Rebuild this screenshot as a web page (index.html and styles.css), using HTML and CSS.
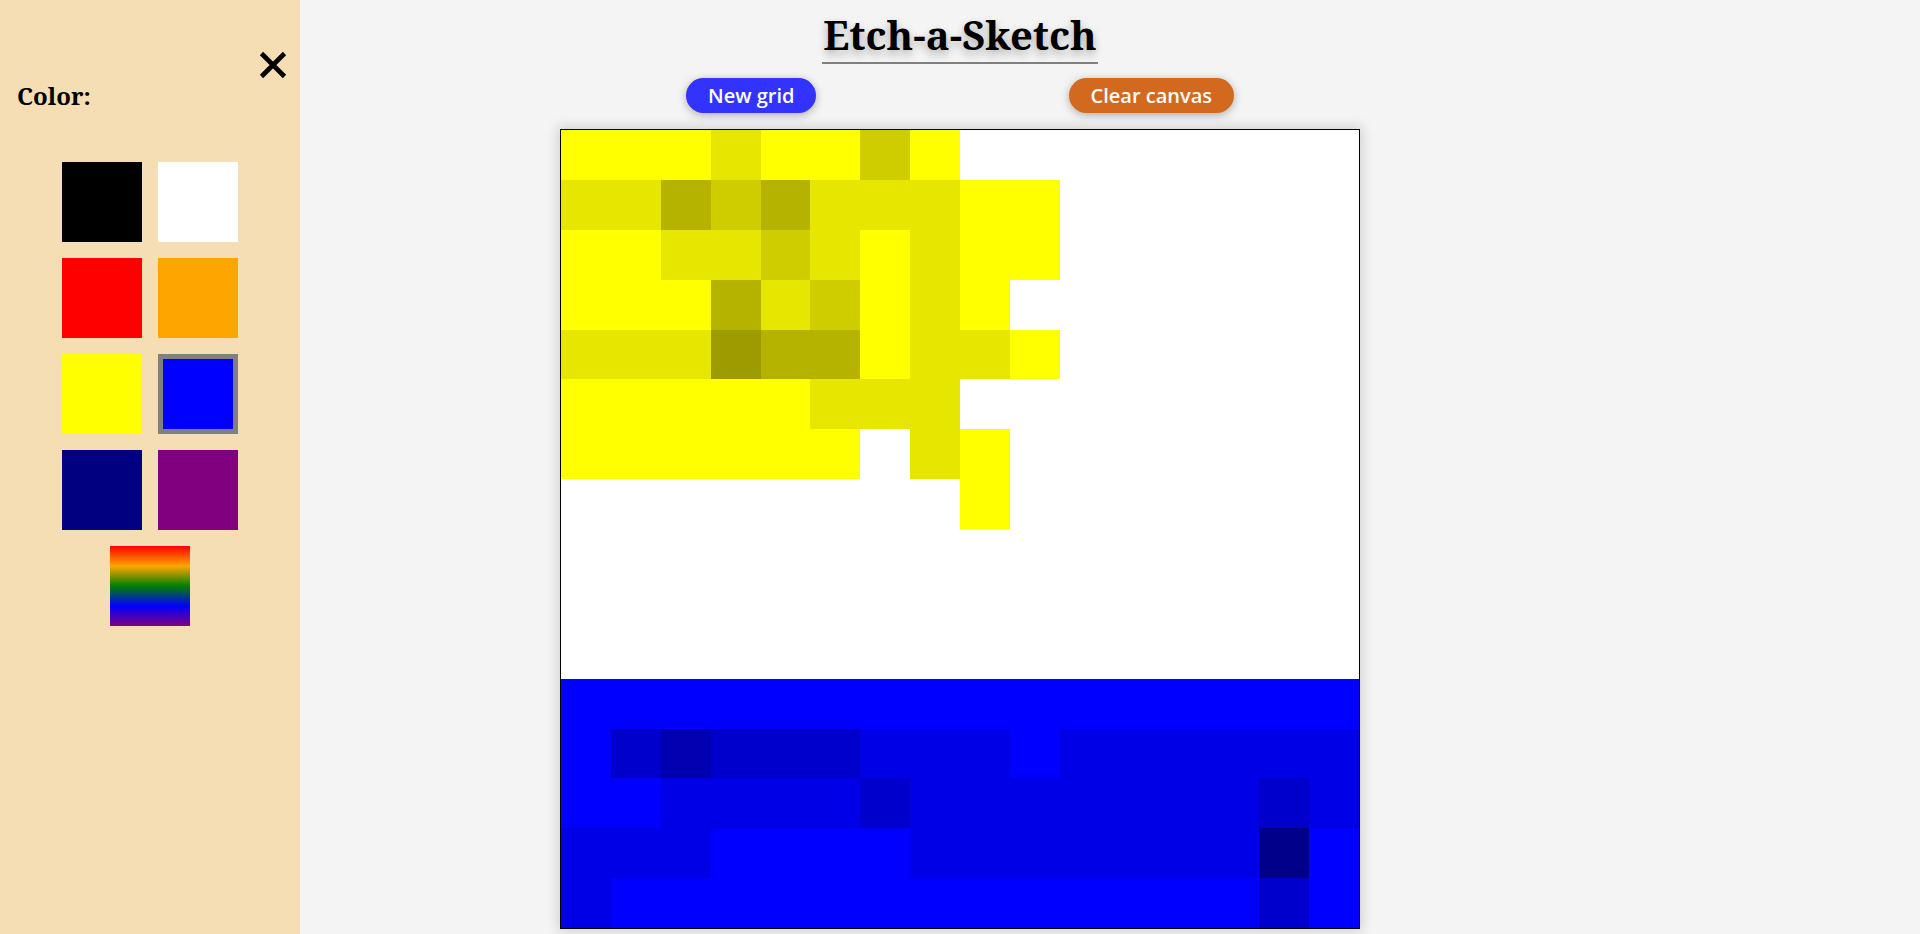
FILE: index.html
```html
<!DOCTYPE html>
<html lang="en">
<head>
<meta charset="utf-8">
<title>Etch-a-Sketch</title>
<link rel="stylesheet" href="styles.css">
</head>
<body>
<aside class="drawer">
  <div class="drawer-top">
    <button class="close" aria-label="Close">
      <svg width="28" height="28" viewBox="0 0 28 28"><path d="M2.5 2.5 L25.5 25.5 M25.5 2.5 L2.5 25.5" stroke="#000" stroke-width="4.6" fill="none"/></svg>
    </button>
  </div>
  <h2 class="drawer-title">Color:</h2>
  <div class="swatches">
    <div class="swatch sw-black"></div>
    <div class="swatch sw-white"></div>
    <div class="swatch sw-red"></div>
    <div class="swatch sw-orange"></div>
    <div class="swatch sw-yellow"></div>
    <div class="swatch sw-blue selected"></div>
    <div class="swatch sw-navy"></div>
    <div class="swatch sw-purple"></div>
    <div class="swatch sw-rainbow"></div>
  </div>
</aside>
<main class="main">
  <h1 class="title">Etch-a-Sketch</h1>
  <div class="controls">
    <button class="btn btn-new">New grid</button>
    <button class="btn btn-clear">Clear canvas</button>
  </div>
  <div class="canvas">
    <!-- row 0 -->
    <div class="y0"></div><div class="y0"></div><div class="y0"></div><div class="y1"></div><div class="y0"></div><div class="y0"></div><div class="y2"></div><div class="y0"></div><div></div><div></div><div></div><div></div><div></div><div></div><div></div><div></div>
    <!-- row 1 -->
    <div class="y1"></div><div class="y1"></div><div class="y3"></div><div class="y2"></div><div class="y3"></div><div class="y1"></div><div class="y1"></div><div class="y1"></div><div class="y0"></div><div class="y0"></div><div></div><div></div><div></div><div></div><div></div><div></div>
    <!-- row 2 -->
    <div class="y0"></div><div class="y0"></div><div class="y1"></div><div class="y1"></div><div class="y2"></div><div class="y1"></div><div class="y0"></div><div class="y1"></div><div class="y0"></div><div class="y0"></div><div></div><div></div><div></div><div></div><div></div><div></div>
    <!-- row 3 -->
    <div class="y0"></div><div class="y0"></div><div class="y0"></div><div class="y3"></div><div class="y1"></div><div class="y2"></div><div class="y0"></div><div class="y1"></div><div class="y0"></div><div></div><div></div><div></div><div></div><div></div><div></div><div></div>
    <!-- row 4 -->
    <div class="y1"></div><div class="y1"></div><div class="y1"></div><div class="y4"></div><div class="y3"></div><div class="y3"></div><div class="y0"></div><div class="y1"></div><div class="y1"></div><div class="y0"></div><div></div><div></div><div></div><div></div><div></div><div></div>
    <!-- row 5 -->
    <div class="y0"></div><div class="y0"></div><div class="y0"></div><div class="y0"></div><div class="y0"></div><div class="y1"></div><div class="y1"></div><div class="y1"></div><div></div><div></div><div></div><div></div><div></div><div></div><div></div><div></div>
    <!-- row 6 -->
    <div class="y0"></div><div class="y0"></div><div class="y0"></div><div class="y0"></div><div class="y0"></div><div class="y0"></div><div></div><div class="y1"></div><div class="y0"></div><div></div><div></div><div></div><div></div><div></div><div></div><div></div>
    <!-- row 7 -->
    <div></div><div></div><div></div><div></div><div></div><div></div><div></div><div></div><div class="y0"></div><div></div><div></div><div></div><div></div><div></div><div></div><div></div>
    <!-- row 8 -->
    <div></div><div></div><div></div><div></div><div></div><div></div><div></div><div></div><div></div><div></div><div></div><div></div><div></div><div></div><div></div><div></div>
    <!-- row 9 -->
    <div></div><div></div><div></div><div></div><div></div><div></div><div></div><div></div><div></div><div></div><div></div><div></div><div></div><div></div><div></div><div></div>
    <!-- row 10 -->
    <div></div><div></div><div></div><div></div><div></div><div></div><div></div><div></div><div></div><div></div><div></div><div></div><div></div><div></div><div></div><div></div>
    <!-- row 11 -->
    <div class="b0"></div><div class="b0"></div><div class="b0"></div><div class="b0"></div><div class="b0"></div><div class="b0"></div><div class="b0"></div><div class="b0"></div><div class="b0"></div><div class="b0"></div><div class="b0"></div><div class="b0"></div><div class="b0"></div><div class="b0"></div><div class="b0"></div><div class="b0"></div>
    <!-- row 12 -->
    <div class="b0"></div><div class="b2"></div><div class="b3"></div><div class="b2"></div><div class="b2"></div><div class="b2"></div><div class="b1"></div><div class="b1"></div><div class="b1"></div><div class="b0"></div><div class="b1"></div><div class="b1"></div><div class="b1"></div><div class="b1"></div><div class="b1"></div><div class="b1"></div>
    <!-- row 13 -->
    <div class="b0"></div><div class="b0"></div><div class="b1"></div><div class="b1"></div><div class="b1"></div><div class="b1"></div><div class="b2"></div><div class="b1"></div><div class="b1"></div><div class="b1"></div><div class="b1"></div><div class="b1"></div><div class="b1"></div><div class="b1"></div><div class="b2"></div><div class="b1"></div>
    <!-- row 14 -->
    <div class="b1"></div><div class="b1"></div><div class="b1"></div><div class="b0"></div><div class="b0"></div><div class="b0"></div><div class="b0"></div><div class="b1"></div><div class="b1"></div><div class="b1"></div><div class="b1"></div><div class="b1"></div><div class="b1"></div><div class="b1"></div><div class="b4"></div><div class="b0"></div>
    <!-- row 15 -->
    <div class="b1"></div><div class="b0"></div><div class="b0"></div><div class="b0"></div><div class="b0"></div><div class="b0"></div><div class="b0"></div><div class="b0"></div><div class="b0"></div><div class="b0"></div><div class="b0"></div><div class="b0"></div><div class="b0"></div><div class="b0"></div><div class="b2"></div><div class="b0"></div>
  </div>
</main>
</body>
</html>
```
FILE: styles.css
```css
* { box-sizing: border-box; }

html, body {
  margin: 0;
  height: 100%;
}

body {
  background: #f4f4f4;
  font-family: "Noto Serif", "DejaVu Serif", serif;
  overflow: hidden;
}

/* Drawer (overlays the page on the left) */
.drawer {
  position: fixed;
  top: 0;
  left: 0;
  width: 300px;
  height: 100%;
  background: #f5deb3;
  padding: 51px 13px 0 17px;
  z-index: 2;
}

.drawer-top {
  display: flex;
  justify-content: flex-end;
}

.close {
  display: block;
  width: 28px;
  height: 28px;
  padding: 0;
  border: 0;
  background: none;
  cursor: pointer;
}

.close svg { display: block; }

.drawer-title {
  margin: 1px 0 0;
  font-size: 24px;
  line-height: 32px;
  font-weight: bold;
  color: #000;
}

.swatches {
  display: grid;
  grid-template-columns: 80px 80px;
  gap: 16px;
  justify-content: center;
  margin: 50px 4px 0 0;
}

.swatch {
  width: 80px;
  height: 80px;
}

.sw-black { background: #000; }
.sw-white { background: #fff; }
.sw-red { background: #f00; }
.sw-orange { background: #ffa500; }
.sw-yellow { background: #ff0; }
.sw-blue { background: #00f; }
.sw-navy { background: #000080; }
.sw-purple { background: #800080; }
.sw-rainbow {
  grid-column: 1 / -1;
  justify-self: center;
  background: linear-gradient(to bottom, red, orange, green, blue, purple);
}

.selected { border: 5px solid #808080; }

/* Main area */
.main {
  display: flex;
  flex-direction: column;
  align-items: center;
}

.title {
  margin: 8px 0 0;
  font-size: 40px;
  line-height: 54px;
  font-weight: bold;
  color: #000;
  padding: 0 1px;
  border-bottom: 2px solid #808080;
  text-shadow: 0 4px 8px rgba(0, 0, 0, 0.3);
}

.controls {
  width: 800px;
  margin-top: 14px;
  display: flex;
  justify-content: space-around;
}

.btn {
  height: 35px;
  padding: 0 22px;
  border: 0;
  border-radius: 18px;
  color: #fff;
  font-family: "Open Sans", "Noto Sans", sans-serif;
  font-weight: 600;
  font-size: 20px;
  box-shadow: 0 2px 8px rgba(0, 0, 0, 0.3);
  cursor: pointer;
}

.btn-new { background: #3333ff; }
.btn-clear { background: #d2691e; }

.canvas {
  margin-top: 16px;
  width: 800px;
  height: 800px;
  border: 1px solid #000;
  background: #fff;
  display: grid;
  grid-template-columns: repeat(16, 1fr);
  grid-template-rows: repeat(16, 1fr);
  box-shadow: 0 0 12px 2px rgba(0, 0, 0, 0.15);
}

.y0 { background: #ffff00; }
.y1 { background: #e6e600; }
.y2 { background: #cfcc00; }
.y3 { background: #b6b300; }
.y4 { background: #9c9c00; }

.b0 { background: #0000ff; }
.b1 { background: #0000e6; }
.b2 { background: #0000cc; }
.b3 { background: #0000b0; }
.b4 { background: #00008a; }
```
